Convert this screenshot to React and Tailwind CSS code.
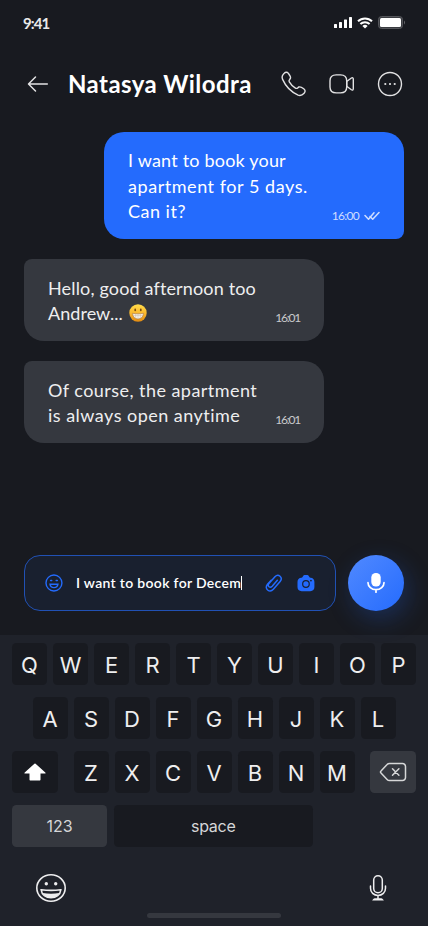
const keyBase = 'flex h-[42px] items-center justify-center rounded-[4.5px]';

function Key({ label }) {
  return (
    <div className={`${keyBase} w-[35px] bg-[#181a20] pt-0.5 font-[Inter,sans-serif] text-[22px] font-normal text-[#eeeeef]`}>
      {label}
    </div>
  );
}

function StatusBar() {
  return (
    <div className="flex h-11 items-center justify-between pt-px pr-[23px] pl-[23px]">
      <span className="text-[15px] leading-5 font-bold tracking-[-0.9px] text-[#e9e9ea]">9:41</span>
      <div className="flex items-center gap-[5px] text-white">
        <svg width="18" height="11" viewBox="0 0 18 11" fill="currentColor">
          <rect x="0" y="7" width="3" height="4" rx="0.6" />
          <rect x="5" y="5" width="3" height="6" rx="0.6" />
          <rect x="10" y="2.5" width="3" height="8.5" rx="0.6" />
          <rect x="15" y="0" width="3" height="11" rx="0.6" />
        </svg>
        <svg width="16" height="12" viewBox="0 0 16 12" fill="none" stroke="currentColor" strokeWidth="2">
          <path d="M1 4.3a10 10 0 0 1 14 0M3.4 7a6.6 6.6 0 0 1 9.2 0" />
          <path d="M5.4 9a3.8 3.8 0 0 1 5.2 0L8 11.6z" fill="currentColor" stroke="none" />
        </svg>
        <svg width="27" height="13" viewBox="0 0 27 13">
          <rect x="0.5" y="0.5" width="24" height="12" rx="3" fill="#3a3c41" stroke="#55565b" />
          <rect x="2" y="2" width="21" height="9" rx="1.5" fill="#fff" />
          <path d="M26 4.5c1.2.8 1.2 3.200 0 4z" fill="#66676b" />
        </svg>
      </div>
    </div>
  );
}

function Header() {
  return (
    <header className="flex h-[79px] items-center px-6 text-[#e2e2e3]">
      <svg width="28" height="28" viewBox="0 0 28 28" fill="none" stroke="currentColor" strokeWidth="1.5" strokeLinecap="round" strokeLinejoin="round">
        <path d="M23.300 14H4.700M11.500 7 4.500 14l7 7" />
      </svg>
      <h1 className="ml-4 w-[212px] pt-px text-[24px] leading-8 font-bold tracking-[0.430px] whitespace-nowrap text-white">Natasya Wilodra</h1>
      <svg width="28" height="28" viewBox="0 0 28 28" fill="none" stroke="currentColor" strokeWidth="1.400" strokeLinejoin="round">
        <path d="M4.200 3.300c1.300-1.300 3-1.400 4.200.1 1 1.300 2.800 3.400 2 5-.6 1.300-2.200 1.700-1.100 3.500 1.500 2.600 3.500 4.700 6.100 6.200 1.800 1.100 2.300-.5 3.500-1.100 1.700-.8 3.800 1 5.100 2 1.500 1.200 1.400 2.900.1 4.200-1.700 1.900-3.800 2.700-6 1.900C11 22 5.400 15.700 2.600 9.400c-1-2.200-.3-4.300 1.600-6.100Z" />
      </svg>
      <svg className="ml-5" width="28" height="28" viewBox="0 0 28 28" fill="none" stroke="currentColor" strokeWidth="1.400" strokeLinejoin="round">
        <path d="M8.200 4.900h4.300c4.100 0 6.200 2.200 6.200 5.900v6.200c0 3.700-2.100 5.900-6.200 5.900H8.200C4.100 22.900 2 20.700 2 17v-6.200c0-3.700 2.100-5.900 6.200-5.900Z" />
        <path d="m18.700 11.500 4.700-3.500c1-.7 1.900-.2 1.900 1v9.800c0 1.200-.9 1.700-1.900 1l-4.700-3.500z" />
      </svg>
      <svg className="ml-5" width="28" height="28" viewBox="0 0 28 28" fill="none" stroke="currentColor" strokeWidth="1.400">
        <circle cx="14" cy="14" r="11.500" />
        <path d="M9.300 14h.01M14 14h.01M18.700 14h.01" strokeWidth="2.200" strokeLinecap="round" />
      </svg>
    </header>
  );
}

function Grin() {
  return (
    <svg className="ml-[6px] inline-block" width="18" height="18" viewBox="0 0 18 18">
      <defs>
        <linearGradient id="face" x1="0" y1="0" x2="0" y2="1">
          <stop offset="0" stopColor="#ffdc4a" />
          <stop offset="0.550" stopColor="#fbb62c" />
          <stop offset="1" stopColor="#e08a12" />
        </linearGradient>
      </defs>
      <circle cx="9" cy="9" r="8.700" fill="url(#face)" />
      <ellipse cx="6.200" cy="5.900" rx="0.900" ry="1.300" fill="#7a4a12" />
      <ellipse cx="11.800" cy="5.900" rx="0.900" ry="1.300" fill="#7a4a12" />
      <path d="M3.500 9.300c3.600.7 7.400.7 11 0-.2 3.500-2.400 5.700-5.500 5.700s-5.300-2.200-5.500-5.700Z" fill="#f6f2ec" stroke="#a7763c" strokeWidth="0.600" />
      <path d="M4 11.600h10M6.700 9.600v4.700M9 9.700V15m2.300-5.400v4.700" stroke="#c3ab8d" strokeWidth="0.400" />
    </svg>
  );
}

function Received({ children }) {
  return (
    <div className="flex h-[82px] w-[300px] items-end justify-between rounded-tl-lg rounded-tr-[20px] rounded-br-[20px] rounded-bl-[20px] bg-[#35383f] px-6 pb-[15px] text-[#eeeeef]">
      <div className="text-[18px] leading-[25.2px] whitespace-nowrap">{children}</div>
      <span className="mb-px text-[12px] leading-[14px] tracking-[-1.200px] text-[#c9cacc]">16:01</span>
    </div>
  );
}

function Composer() {
  return (
    <div className="flex h-14 gap-3 px-6">
      <div className="flex w-[312px] items-center rounded-2xl border border-[#2151b4] bg-[#19202f] pr-[19px] pl-[19px]">
        <svg width="20" height="20" viewBox="0 0 20 20" fill="none" stroke="#246bfd" strokeWidth="1.400" strokeLinecap="round">
          <circle cx="10" cy="10" r="8" />
          <path d="M6.600 7.500h1.200M12.200 7.500h1.200M6 11.200h8c-.3 2.200-1.800 3.500-4 3.500s-3.700-1.300-4-3.500Z" />
        </svg>
        <div className="ml-3 flex w-[169px] items-center text-white">
          <span className="text-[14px] leading-5 font-semibold tracking-[0.320px] whitespace-nowrap">I want to book for Decem</span>
          <span className="h-3.5 w-px bg-white" />
        </div>
        <svg className="ml-5" width="20" height="20" viewBox="0 0 20 20" fill="none" stroke="#246bfd" strokeWidth="1.500" strokeLinecap="round">
          <path d="m7.200 7.200-3.700 4.100c-3.800 4.300 2.200 9.200 5.900 5l6.800-7.900c3.300-3.900-1.800-8.400-5.200-4.700l-6 6.900c-2.100 2.500 1 5.100 3.200 2.700l5.200-6" />
        </svg>
        <svg className="ml-3" width="20" height="20" viewBox="0 0 20 20">
          <path d="M6.400 4.300 7.200 3c.4-.8 1-1.100 1.800-1.100h2c.8 0 1.400.3 1.800 1.100l.8 1.300c.2.300.5.500.9.500 2.500.1 4 1.600 4 4.100v5.200c0 2.700-1.500 4.100-4.200 4.100H5.700c-2.700 0-4.200-1.400-4.200-4.100V8.900c0-2.500 1.500-4 4-4.100.4 0 .7-.2.900-.5Z" fill="#246bfd" />
          <circle cx="10" cy="11" r="3.300" fill="none" stroke="#19202f" strokeWidth="1.200" />
          <circle cx="15" cy="7.600" r="0.900" fill="#19202f" />
        </svg>
      </div>
      <div className="flex size-14 items-center justify-center rounded-full bg-linear-to-br from-[#5089ff] to-[#246bfd] shadow-[4px_8px_24px_rgba(36,107,253,0.25)]">
        <svg width="24" height="24" viewBox="0 0 24 24" fill="none" stroke="#fff" strokeWidth="1.700" strokeLinecap="round">
          <rect x="7.300" y="2" width="9.400" height="13.500" rx="4.500" fill="#fff" stroke="none" />
          <path d="M4 11.700a8 7 0 0 0 16 0M12 19v2.200" />
        </svg>
      </div>
    </div>
  );
}

function Keyboard() {
  return (
    <section className="mt-6 h-[291px] bg-[#1f222a] px-3 pt-2">
      <div className="flex flex-col gap-3">
        <div className="flex justify-between">{[...'QWERTYUIOP'].map((k) => <Key key={k} label={k} />)}</div>
        <div className="flex justify-center gap-1.5">{[...'ASDFGHJKL'].map((k) => <Key key={k} label={k} />)}</div>
        <div className="flex justify-between">
          <div className={`${keyBase} w-[46px] bg-[#181a20]`}>
            <svg width="22" height="18" viewBox="0 0 22 18" fill="#fff">
              <path d="M10.400.8a.8.800 0 0 1 1.200 0l9.700 8.700c.6.600.3 1-.4 1H16.500v6c0 .6-.4 1-1 1h-9c-.6 0-1-.4-1-1v-6H1.100c-.7 0-1-.4-.4-1z" />
            </svg>
          </div>
          <div className="flex gap-1.5">{[...'ZXCVBNM'].map((k) => <Key key={k} label={k} />)}</div>
          <div className={`${keyBase} w-[46px] bg-[#35383f]`}>
            <svg width="28" height="20" viewBox="0 0 28 20" fill="none" stroke="#d6d7d8" strokeWidth="1.500" strokeLinecap="round" strokeLinejoin="round">
              <path d="M10.500 1.500h13a3 3 0 0 1 3 3v11a3 3 0 0 1-3 3h-13c-1 0-1.800-.4-2.400-1.100L2 11c-.6-.6-.6-1.400 0-2l6.100-6.400c.6-.7 1.400-1.100 2.400-1.100Z" />
              <path d="m13.500 6.800 6.400 6.400M19.900 6.800l-6.400 6.400" />
            </svg>
          </div>
        </div>
        <div className="flex gap-[7px] font-[Inter,sans-serif] text-[16px] text-[#d5d6d8]">
          <div className={`${keyBase} w-[95px] bg-[#35383f]`}>123</div>
          <div className={`${keyBase} w-[198.500px] bg-[#181a20] tracking-[-0.300px]`}>space</div>
        </div>
      </div>
      <div className="mt-[26px] flex items-center justify-between px-6 text-[#eeeeef]">
        <svg width="31" height="30" viewBox="0 0 31 30" fill="none" stroke="currentColor" strokeWidth="1.600">
          <ellipse cx="15" cy="15" rx="14.200" ry="13.200" />
          <circle cx="10.300" cy="10.800" r="1.700" fill="currentColor" stroke="none" />
          <circle cx="19.700" cy="10.800" r="1.700" fill="currentColor" stroke="none" />
          <path d="M5.200 16.800c6.500.7 13.100.7 19.600 0-.6 5-4.600 8-9.800 8s-9.200-3-9.800-8Z" />
          <path d="M6.500 20c5.500 1 11.500 1 17 0-1.500 3-4.600 4.500-8.500 4.500S8 23 6.500 20Z" fill="currentColor" stroke="none" />
        </svg>
        <svg className="mr-[5px]" width="18" height="28" viewBox="0 0 18 28" fill="none" stroke="currentColor" strokeWidth="1.500" strokeLinecap="round">
          <rect x="4.700" y="1.800" width="8.600" height="17" rx="4.300" />
          <path d="M1.500 12v2.200c0 4.200 3.200 7.200 7.500 7.200s7.500-3 7.500-7.200V12M9 21.400V24M4.500 25.800c1-1.500 8-1.500 9 0z" />
        </svg>
      </div>
      <div className="mx-auto mt-[9.500px] h-[5px] w-[134px] rounded-full bg-[#35383f]" />
    </section>
  );
}

export default function App() {
  return (
    <main className="h-[926px] w-[428px] overflow-hidden bg-[#181a20] font-[Lato,sans-serif]">
      <StatusBar />
      <Header />
      <div className="flex h-8 flex-col gap-5 px-6 pt-[9px] min-h-[432px]">
        <div className="flex h-[107px] w-[300px] items-end justify-between self-end rounded-tl-[20px] rounded-tr-[20px] rounded-br-lg rounded-bl-[20px] bg-[#246bfd] px-6 pb-[15px] text-white">
          <div className="text-[18px] leading-[25.200px] whitespace-nowrap">
            <p className="tracking-[0.200px]">I want to book your</p>
            <p className="tracking-[0.550px]">apartment for 5 days.</p>
            <p className="tracking-[0.500px]">Can it?</p>
          </div>
          <div className="mb-px flex items-center gap-[5px] text-[#cfddff]">
            <span className="text-[12px] leading-[14px] tracking-[-0.700px]">16:00</span>
            <svg width="16" height="10" viewBox="0 0 16 10" fill="none" stroke="currentColor" strokeWidth="1.500" strokeLinecap="round" strokeLinejoin="round">
              <path d="m1 4.500 3.500 3.700 5.500-6.500M6 5.500l2.700 2.700L15 1.500" />
            </svg>
          </div>
        </div>
        <Received>
          <p className="tracking-[0.150px]">Hello, good afternoon too</p>
          <p className="flex items-center tracking-[0.050px]">Andrew...<Grin /></p>
        </Received>
        <Received>
          <p className="tracking-[0.450px]">Of course, the apartment</p>
          <p className="tracking-[0.480px]">is always open anytime</p>
        </Received>
      </div>
      <Composer />
      <Keyboard />
    </main>
  );
}
